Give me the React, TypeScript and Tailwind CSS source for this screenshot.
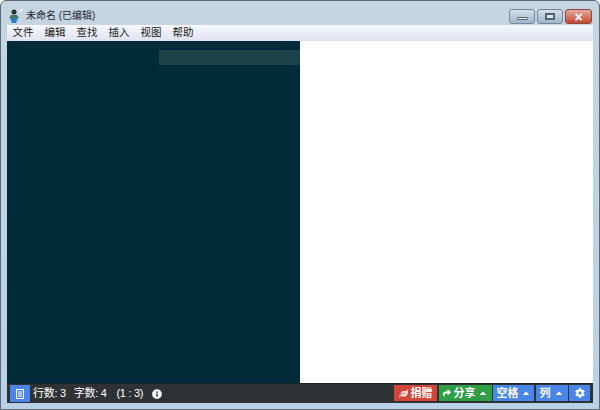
import { FaCaretUp, FaCog, FaInfoCircle, FaLeaf, FaShare } from "react-icons/fa";

const menus = ["文件", "编辑", "查找", "插入", "视图", "帮助"];

export default function App() {
  return (
    <div
      className="flex h-[410px] w-[600px] flex-col overflow-hidden rounded-t-[6px] border border-[#5d6b78] bg-gradient-to-b from-[#c6d5e2] via-[#bfd3e5] to-[#b9d1e7] text-[11px] text-[#111]"
      style={{ fontFamily: '"Liberation Sans", "Noto Sans CJK SC", sans-serif' }}
    >
      <div className="flex h-[24px] shrink-0 items-start pl-[7px] pr-[7px]">
        <svg width="16" height="17" viewBox="0 0 16 17" className="mt-[7px]">
          <circle cx="6" cy="4" r="2.5" fill="#26332f" />
          <path d="M3 7h6l2 3H1z" fill="#3d7a55" />
          <path d="M2 10h8l-2 5H4z" fill="#2a7fc4" />
          <path d="M11 2l4-1-2 4z" fill="#f4f7fa" />
        </svg>
        <span className="ml-[2px] mt-[7px] text-[10px] leading-[16px] text-[#1c2630]">未命名 (已编辑)</span>
        <div className="ml-auto mt-[8px] flex gap-[2px]">
          <div className="flex h-[15px] w-[26px] items-center justify-center rounded-[3px] border border-[#74879a] bg-gradient-to-b from-[#d3e0eb] to-[#9fb6cc]">
            <span className="mt-[4px] h-[3px] w-[11px] rounded-[1px] border border-[#55626e] bg-white" />
          </div>
          <div className="flex h-[15px] w-[26px] items-center justify-center rounded-[3px] border border-[#74879a] bg-gradient-to-b from-[#d3e0eb] to-[#9fb6cc]">
            <span className="h-[7px] w-[10px] border-[2px] border-[#56636f] bg-[#dfe8f0]" />
          </div>
          <div className="flex h-[15px] w-[27px] items-center justify-center rounded-[3px] border border-[#8a4a3e] bg-gradient-to-b from-[#e4a99c] to-[#c5462f] text-[14px] font-bold leading-none text-white">
            ×
          </div>
        </div>
      </div>
      <div className="mx-[6px] flex h-[16px] shrink-0 items-center gap-[12px] bg-gradient-to-b from-[#f6f8fc] to-[#dfe3f1] pl-[5.5px] text-[10.5px] text-[#1a1a1a]">
        {menus.map((m) => (
          <span key={m} className="w-[20px] whitespace-nowrap">
            {m}
          </span>
        ))}
      </div>
      <div className="mx-[6px] flex min-h-0 flex-1">
        <div className="w-[293px] bg-[#012b39] pt-[9px]">
          <div className="ml-[152px] h-[15px] bg-[#1d4249]" />
        </div>
        <div className="flex-1 bg-white" />
      </div>
      <div className="mx-[6px] mb-[6px] flex h-[20px] shrink-0 items-start border-t border-[#1a2226] bg-[#2f3234] pl-[3px] pr-[3px] pt-[1px] text-[11px] text-white">
        <div className="flex h-[17px] w-[20px] items-center justify-center bg-[#4a86e8]">
          <svg width="10" height="10" viewBox="0 0 10 10" fill="none" stroke="white" strokeWidth="1">
            <rect x="1.5" y="0.5" width="7" height="9" />
            <path d="M3 3h4M3 5h4M3 7h4" />
          </svg>
        </div>
        <div className="flex h-[17px] items-center tracking-[-0.3px]">
          <span className="ml-[3px]">行数: 3</span>
          <span className="ml-[8px]">字数: 4</span>
          <span className="ml-[10px]">(1 : 3)</span>
          <FaInfoCircle size={10} className="ml-[9px]" />
        </div>
        <div className="ml-auto flex h-[16px] gap-[1.5px] font-bold">
          <div className="flex w-[43px] items-center justify-center bg-[#d2453a]">
            <FaLeaf size={9} className="mr-[3px] text-[#f6d5d0]" />
            捐赠
          </div>
          <div className="flex w-[53px] items-center justify-center bg-[#2f9e44]">
            <FaShare size={8} className="mr-[3px]" />
            分享
            <FaCaretUp size={10} className="ml-[2px]" />
          </div>
          <div className="flex w-[41px] items-center justify-center bg-[#4a86e8]">
            空格
            <FaCaretUp size={10} className="ml-[2px]" />
          </div>
          <div className="flex w-[32px] items-center justify-center bg-[#4a86e8]">
            列
            <FaCaretUp size={10} className="ml-[3px]" />
          </div>
          <div className="flex w-[21px] items-center justify-center bg-[#4a86e8]">
            <FaCog size={10} />
          </div>
        </div>
      </div>
    </div>
  );
}
